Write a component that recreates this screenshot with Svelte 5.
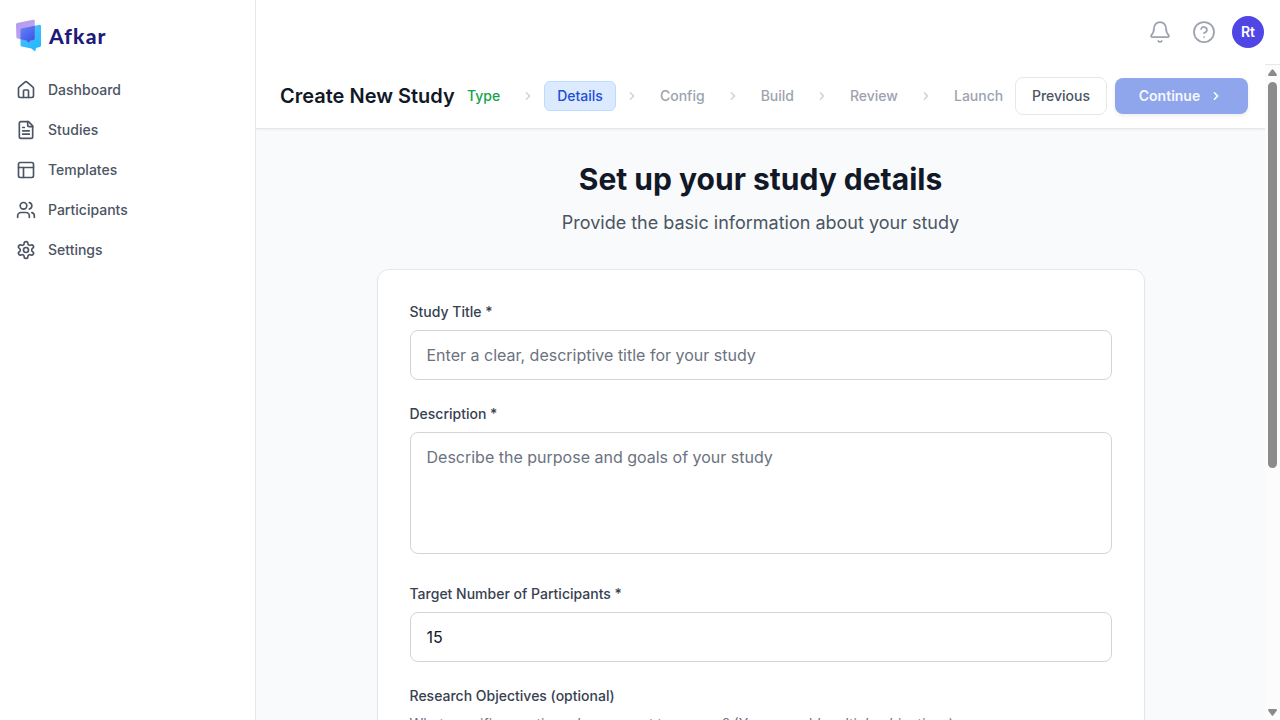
<script>
  const nav = [
    { label: 'Dashboard', icon: 'home' },
    { label: 'Studies', icon: 'file' },
    { label: 'Templates', icon: 'layout' },
    { label: 'Participants', icon: 'users' },
    { label: 'Settings', icon: 'settings' }
  ];
  const icons = {
    home: ['M15 21v-8a1 1 0 0 0-1-1h-4a1 1 0 0 0-1 1v8', 'M3 10a2 2 0 0 1 .709-1.528l7-5.999a2 2 0 0 1 2.582 0l7 5.999A2 2 0 0 1 21 10v9a2 2 0 0 1-2 2H5a2 2 0 0 1-2-2z'],
    file: ['M15 2H6a2 2 0 0 0-2 2v16a2 2 0 0 0 2 2h12a2 2 0 0 0 2-2V7Z', 'M14 2v4a2 2 0 0 0 2 2h4', 'M10 9H8', 'M16 13H8', 'M16 17H8'],
    layout: ['M5 3h14a2 2 0 0 1 2 2v14a2 2 0 0 1-2 2H5a2 2 0 0 1-2-2V5a2 2 0 0 1 2-2z', 'M3 9h18', 'M9 21V9'],
    users: ['M16 21v-2a4 4 0 0 0-4-4H6a4 4 0 0 0-4 4v2', 'M9 3a4 4 0 1 0 0 8a4 4 0 1 0 0-8', 'M22 21v-2a4 4 0 0 0-3-3.87', 'M16 3.13a4 4 0 0 1 0 7.75'],
    settings: ['M12.22 2h-.44a2 2 0 0 0-2 2v.18a2 2 0 0 1-1 1.73l-.43.25a2 2 0 0 1-2 0l-.15-.08a2 2 0 0 0-2.73.73l-.22.38a2 2 0 0 0 .73 2.73l.15.1a2 2 0 0 1 1 1.72v.51a2 2 0 0 1-1 1.74l-.15.09a2 2 0 0 0-.73 2.73l.22.38a2 2 0 0 0 2.73.73l.15-.08a2 2 0 0 1 2 0l.43.25a2 2 0 0 1 1 1.73V20a2 2 0 0 0 2 2h.44a2 2 0 0 0 2-2v-.18a2 2 0 0 1 1-1.73l.43-.25a2 2 0 0 1 2 0l.15.08a2 2 0 0 0 2.73-.73l.22-.39a2 2 0 0 0-.73-2.73l-.15-.08a2 2 0 0 1-1-1.74v-.5a2 2 0 0 1 1-1.74l.15-.09a2 2 0 0 0 .73-2.73l-.22-.38a2 2 0 0 0-2.73-.73l-.15.08a2 2 0 0 1-2 0l-.43-.25a2 2 0 0 1-1-1.73V4a2 2 0 0 0-2-2z', 'M12 9a3 3 0 1 0 0 6a3 3 0 1 0 0-6']
  };
  const steps = ['Type', 'Details', 'Config', 'Build', 'Review', 'Launch'];
  const chevron = 'M7.293 14.707a1 1 0 0 1 0-1.414L10.586 10 7.293 6.707a1 1 0 0 1 1.414-1.414l4 4a1 1 0 0 1 0 1.414l-4 4a1 1 0 0 1-1.414 0z';
</script>

<div class="app">
  <aside>
    <div class="logo">
      <svg width="26" height="34" viewBox="0 0 26 34">
        <defs>
          <linearGradient id="back" x1="0" y1="0" x2="1" y2="1"><stop offset="0" stop-color="#b39aec" /><stop offset="1" stop-color="#c2a8f4" /></linearGradient>
          <linearGradient id="front" x1="0" y1="0" x2="0.6" y2="1"><stop offset="0" stop-color="#58c3f6" /><stop offset="1" stop-color="#22b8ff" /></linearGradient>
          <linearGradient id="mid" x1="0" y1="0" x2="0.7" y2="1"><stop offset="0" stop-color="#6d83f6" /><stop offset="1" stop-color="#3b56e8" /></linearGradient>
        </defs>
        <path fill="url(#front)" d="M4.5 10.7Q4.5 9.8 5.5 9.6L23.6 5.8Q25 5.6 25 7V26.4Q25 27.8 23.6 28.1L20 29L19.2 32.6L15.4 29.6L5.8 27.6Q4.5 27.2 4.5 26Z" />
        <path fill="url(#back)" d="M0 5.6Q0 4.4 1.2 4L17.2.7Q18.8.4 18.8 2V19.6Q18.8 20.7 17.6 21.1L14 21.8L13 24L10.2 21.4L1.4 19.6Q.5 19.3.4 18Z" />
        <path fill="url(#mid)" d="M4.5 10.7Q4.5 9.8 5.5 9.6L18.8 6.8V19.6Q18.8 20.7 17.6 21.1L14 21.8L13 24L10.2 21.4L4.5 20.2Z" />
      </svg>
      <span>Afkar</span>
    </div>
    <nav>
      {#each nav as item}
        <a href="#top">
          <svg class="line" width="20" height="20" viewBox="0 0 24 24">{#each icons[item.icon] as d}<path {d} />{/each}</svg>
          {item.label}
        </a>
      {/each}
    </nav>
  </aside>

  <div class="right">
    <header>
      <svg class="line top" width="24" height="24" viewBox="0 0 24 24"><path d="M10.268 21a2 2 0 0 0 3.464 0M3.262 15.326A1 1 0 0 0 4 17h16a1 1 0 0 0 .74-1.673C19.41 13.956 18 12.499 18 8A6 6 0 0 0 6 8c0 4.499-1.411 5.956-2.738 7.326" /></svg>
      <svg class="line top" width="24" height="24" viewBox="0 0 24 24"><circle cx="12" cy="12" r="10" /><path d="M9.09 9a3 3 0 0 1 5.83 1c0 2-3 3-3 3M12 17h.01" /></svg>
      <div class="avatar">Rt</div>
    </header>

    <div class="viewport">
      <main>
        <div class="stepbar">
          <h1>Create New Study</h1>
          <div class="steps">
            {#each steps as step, i}
              {#if i > 0}
                <svg class="chev" width="16" height="16" viewBox="0 0 20 20"><path d={chevron} /></svg>
              {/if}
              <span class="step" class:done={i === 0} class:current={i === 1}>{step}</span>
            {/each}
          </div>
          <button class="previous">Previous</button>
          <button class="continue">Continue<svg width="16" height="16" viewBox="0 0 20 20"><path d={chevron} /></svg></button>
        </div>

        <section>
          <h2>Set up your study details</h2>
          <p class="sub">Provide the basic information about your study</p>
          <form>
            <label for="title">Study Title *</label>
            <input id="title" type="text" placeholder="Enter a clear, descriptive title for your study" />
            <label for="description">Description *</label>
            <textarea id="description" placeholder="Describe the purpose and goals of your study"></textarea>
            <label for="target">Target Number of Participants *</label>
            <input id="target" type="text" value="15" />
            <label for="objectives">Research Objectives (optional)</label>
            <p class="hint">What specific questions do you want to answer? (You can add multiple objectives)</p>
          </form>
        </section>
      </main>
      <div class="scrollbar">
        <svg width="9" height="7" viewBox="0 0 9 7"><path d="M3.6.7Q4.5-.4 5.4.7L8.7 5.3Q9.4 7 8 7H1Q-.4 7 .3 5.3Z" /></svg>
        <div class="thumb"></div>
        <svg class="down" width="9" height="7" viewBox="0 0 9 7"><path d="M3.6 6.3Q4.5 7.4 5.4 6.3L8.7 1.7Q9.4 0 8 0H1Q-.4 0 .3 1.7Z" /></svg>
      </div>
    </div>
  </div>
</div>

<style>
  :global(body) { overflow: hidden; }
  .app, .app * { box-sizing: border-box; }
  .app { display: flex; width: 1280px; height: 720px; overflow: hidden; background: #fff; font-family: Inter, sans-serif; font-size: 16px; line-height: 24px; color: #111827; }
  h1, h2, p { margin: 0; }
  svg { flex: none; display: block; }
  .line { fill: none; stroke: currentColor; stroke-width: 2; stroke-linecap: round; stroke-linejoin: round; }
  .top { stroke-width: 1.75; }

  aside { width: 256px; flex: none; border-right: 1px solid #e5e7eb; }
  .logo { display: flex; align-items: center; height: 70px; padding: 2px 0 0 16px; gap: 7px; }
  .logo span { font-family: Lato, sans-serif; font-size: 21px; font-weight: 900; color: #1e1b7b; letter-spacing: 1.1px; }
  nav a { display: flex; align-items: center; gap: 12px; height: 40px; padding-left: 16px; font-size: 14px; line-height: 20px; font-weight: 500; color: #4b5563; text-decoration: none; }

  .right { flex: 1; min-width: 0; display: flex; flex-direction: column; }
  header { height: 64px; flex: none; display: flex; align-items: center; justify-content: flex-end; padding-right: 16px; gap: 20px; color: #9ca3af; }
  .avatar { width: 32px; height: 32px; margin-left: -4px; border-radius: 50%; background: #4f46e5; color: #fff; font-size: 14px; line-height: 32px; font-weight: 600; text-align: center; }
  .viewport { flex: 1; min-height: 0; display: flex; }
  main { flex: 1; min-width: 0; background: #f9fafb; overflow: hidden; }
  .stepbar { height: 65px; display: flex; align-items: center; padding: 0 0 0 24px; background: #fff; border-bottom: 1px solid #e5e7eb; box-shadow: 0 1px 2px rgba(0, 0, 0, .05); white-space: nowrap; }
  h1 { width: 175px; flex: none; font-size: 20px; line-height: 28px; font-weight: 600; }
  .steps { width: 560px; flex: none; display: flex; align-items: center; gap: 8px; }
  .step { padding: 4px 12px; border-radius: 6px; font-size: 14px; line-height: 20px; font-weight: 500; color: #9ca3af; }
  .done { color: #16a34a; }
  .current { color: #1d4ed8; background: #dbeafe; border: 1px solid #bfdbfe; }
  .chev { fill: #d1d5db; }
  button { flex: none; font: 500 14px/20px Inter, sans-serif; border-radius: 8px; padding: 0; }
  .previous { width: 92px; height: 38px; margin-right: 8px; color: #4b5563; background: #fff; border: 1px solid #e5e7eb; }
  .continue { width: 133px; height: 36px; display: flex; align-items: center; justify-content: center; gap: 8px; border: 0; background: #8fa6ec; color: #f5f7fd; font-weight: 600; box-shadow: 0 2px 4px rgba(0, 0, 0, .07); }
  .continue svg { fill: #fff; }

  section { width: 768px; margin: 0 auto; padding-top: 32px; text-align: center; }
  h2 { font-size: 30px; line-height: 36px; font-weight: 700; }
  .sub { margin-top: 12px; font-size: 18px; line-height: 28px; color: #4b5563; }
  form { margin-top: 32px; height: 700px; padding: 32px; text-align: left; background: #fff; border: 1px solid #e5e7eb; border-radius: 12px; box-shadow: 0 1px 2px rgba(0, 0, 0, .05); }
  label { display: block; margin-bottom: 8px; font-size: 14px; line-height: 20px; font-weight: 500; color: #374151; }
  input, textarea { display: block; width: 100%; padding: 12px 16px; margin: 0 0 24px; font: 400 16px/24px Inter, sans-serif; color: #111827; border: 1px solid #d1d5db; border-radius: 8px; background: #fff; outline: none; }
  input { height: 50px; }
  textarea { height: 122px; margin-bottom: 30px; resize: none; }
  input::placeholder, textarea::placeholder { color: #6b7280; opacity: 1; }
  .hint { font-size: 14px; line-height: 20px; color: #6b7280; }

  .scrollbar { width: 15px; flex: none; display: flex; flex-direction: column; align-items: center; padding: 4px 0 4px; background: #fcfcfc; border-top: 1px solid #e5e7eb; fill: #8b8b8b; }
  .thumb { width: 9px; height: 386px; margin-top: 6px; border-radius: 5px; background: #8b8b8b; }
  .down { margin-top: auto; }
</style>
